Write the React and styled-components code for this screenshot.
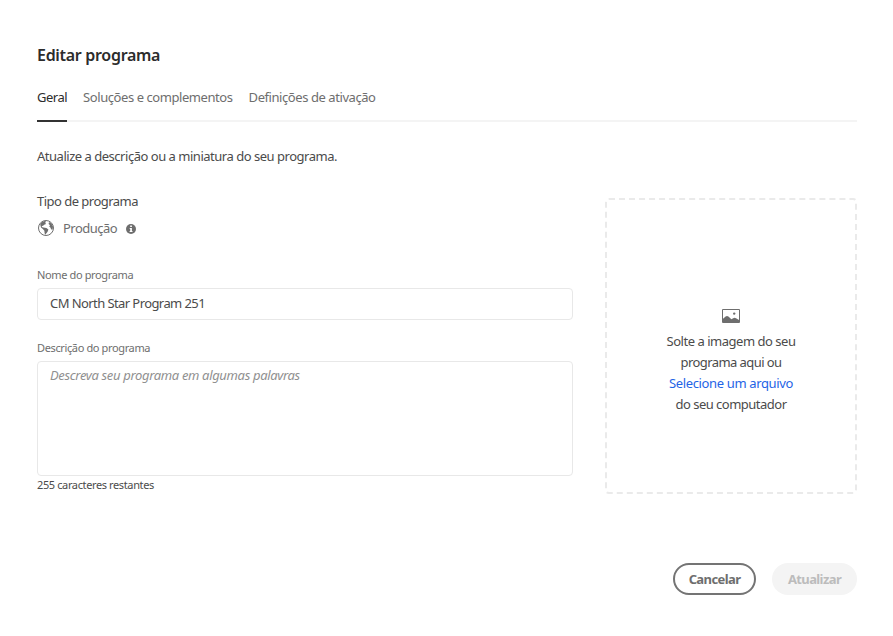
import React from "react";
import styled, { createGlobalStyle } from "styled-components";

const GlobalStyle = createGlobalStyle`
  *, *::before, *::after { box-sizing: border-box; }
  body {
    margin: 0;
    background: #fff;
    color: #4b4b4b;
    font-family: "Noto Sans", "Open Sans", sans-serif;
    font-size: 13px;
    line-height: 20px;
  }
`;

const Dialog = styled.main`
  width: 893px;
  height: 636px;
  padding: 43px 36px 0 37px;
  display: flex;
  flex-direction: column;
`;

const Title = styled.h1`
  margin: 0;
  font-size: 16px;
  font-weight: 600;
  line-height: 24px;
  letter-spacing: -0.3px;
  color: #2c2c2c;
`;

const Tabs = styled.nav`
  display: flex;
  gap: 16px;
  height: 35px;
  margin-top: 20px;
  box-shadow: inset 0 -2px #f4f4f4;
`;

const Tab = styled.a`
  height: 35px;
  white-space: nowrap;
  letter-spacing: ${(p) => p.$spacing}px;
  color: ${(p) => (p.$active ? "#2c2c2c" : "#6e6e6e")};
  border-bottom: 2px solid ${(p) => (p.$active ? "#323232" : "transparent")};
`;

const Intro = styled.p`
  margin: 24px 0 25px;
  letter-spacing: -0.48px;
`;

const Columns = styled.div`
  display: flex;
  justify-content: space-between;
`;

const Form = styled.form`
  width: 536px;
  display: flex;
  flex-direction: column;
`;

const TypeHeading = styled.div`
  letter-spacing: -0.52px;
`;

const TypeRow = styled.div`
  display: flex;
  align-items: center;
  height: 20px;
  margin-top: 7px;
  color: #6e6e6e;
  letter-spacing: -0.53px;
`;

const GlobeIcon = styled.svg`
  width: 18px;
  height: 18px;
  margin-right: 8px;
`;

const InfoIcon = styled.svg`
  width: 10px;
  height: 10px;
  margin: 2px 0 0 9px;
`;

const Label = styled.label`
  margin-top: ${(p) => p.$gap}px;
  height: 21px;
  font-size: 11px;
  line-height: 16px;
  letter-spacing: -0.37px;
  color: #6e6e6e;
`;

const TextInput = styled.input`
  width: 100%;
  height: 32px;
  padding: 0 12px 2px;
  border: 1px solid #e8e8e8;
  border-radius: 4px;
  outline: none;
  background: #fff;
  font: inherit;
  letter-spacing: -0.58px;
  color: #4b4b4b;
`;

const TextArea = styled.textarea`
  display: block;
  width: 100%;
  height: 115px;
  padding: 3px 12px;
  border: 1px solid #e8e8e8;
  border-radius: 4px;
  outline: none;
  resize: none;
  background: #fff;
  font: inherit;
  &::placeholder {
    color: #909090;
    font-style: italic;
    letter-spacing: -0.34px;
  }
`;

const Counter = styled.div`
  margin-top: 1px;
  font-size: 11px;
  line-height: 16px;
  letter-spacing: -0.38px;
`;

const DropZone = styled.section`
  width: 252px;
  height: 296px;
  margin-top: 7px;
  padding-top: 109px;
  display: flex;
  flex-direction: column;
  align-items: center;
  border: 2px dashed #eaeaea;
  border-radius: 4px;
`;

const ImageIcon = styled.svg`
  width: 18px;
  height: 14px;
  margin-bottom: 8px;
`;

const DropLine = styled.span`
  line-height: 21px;
  letter-spacing: ${(p) => p.$spacing}px;
`;

const DropLink = styled(DropLine).attrs({ as: "a" })`
  color: #1f64e6;
`;

const Actions = styled.footer`
  display: flex;
  justify-content: flex-end;
  gap: 16px;
  margin-top: 69px;
`;

const Button = styled.button`
  width: ${(p) => p.$width}px;
  height: 32px;
  padding: 0;
  border: 2px solid ${(p) => (p.disabled ? "#f4f4f4" : "#747474")};
  border-radius: 16px;
  background: ${(p) => (p.disabled ? "#f4f4f4" : "#fff")};
  color: ${(p) => (p.disabled ? "#bcbcbc" : "#6e6e6e")};
  font: inherit;
  font-weight: 700;
  letter-spacing: -0.6px;
`;

export default function App() {
  return (
    <>
      <GlobalStyle />
      <Dialog>
        <Title>Editar programa</Title>
        <Tabs>
          <Tab $active $spacing={-0.5}>Geral</Tab>
          <Tab $spacing={-0.43}>Soluções e complementos</Tab>
          <Tab $spacing={-0.43}>Definições de ativação</Tab>
        </Tabs>
        <Intro>Atualize a descrição ou a miniatura do seu programa.</Intro>
        <Columns>
          <Form>
            <TypeHeading>Tipo de programa</TypeHeading>
            <TypeRow>
              <GlobeIcon viewBox="0 0 18 18">
                <circle cx="9" cy="9" r="7.5" fill="none" stroke="#6e6e6e" />
                <path
                  fill="#6e6e6e"
                  d="M3.2 5.6 4.4 3.6 7.6 2 9.2 2.6 8.2 3.8 9 5 7.2 5.8 5.8 7 5 6.8 4.8 8 6.4 8.6 9.4 9 11.4 10.6 10.6 12.8 9.2 14.4 8.4 15.8 7.6 14.2 7.4 11.8 5.6 9.8 4 8.6ZM12 3 14.4 4.4 16 7.6 15.6 10.6 14.2 10.4 13.4 8.6 12.2 7.6 13 6.2 11.6 5Z"
                />
              </GlobeIcon>
              Produção
              <InfoIcon viewBox="0 0 10 10">
                <circle cx="5" cy="5" r="5" fill="#6e6e6e" />
                <path fill="#fff" d="M4.2 1.6h1.7v1.5H4.2zM3.7 4.1h2.2v3h.6v1H3.6v-1h.6v-2h-.5z" />
              </InfoIcon>
            </TypeRow>
            <Label htmlFor="name" $gap={29}>Nome do programa</Label>
            <TextInput id="name" defaultValue="CM North Star Program 251" />
            <Label htmlFor="description" $gap={20}>Descrição do programa</Label>
            <TextArea id="description" placeholder="Descreva seu programa em algumas palavras" />
            <Counter>255 caracteres restantes</Counter>
          </Form>
          <DropZone>
            <ImageIcon viewBox="0 0 18 14">
              <path fill="none" stroke="#6e6e6e" d="M.5.5h17v13H.5z" />
              <path fill="#6e6e6e" d="M1 9.8 3.6 7.4Q5 6.4 6.4 7.4L9.4 10.2 11.2 9.2Q12.6 8.2 14 9.2L17 11V13.5H1Z" />
              <circle cx="12.2" cy="4.6" r="1.2" fill="#6e6e6e" />
            </ImageIcon>
            <DropLine $spacing={-0.47}>Solte a imagem do seu</DropLine>
            <DropLine $spacing={-0.57}>programa aqui ou</DropLine>
            <DropLink $spacing={-0.36}>Selecione um arquivo</DropLink>
            <DropLine $spacing={-0.51}>do seu computador</DropLine>
          </DropZone>
        </Columns>
        <Actions>
          <Button type="button" $width={83}>Cancelar</Button>
          <Button type="button" $width={85} disabled>Atualizar</Button>
        </Actions>
      </Dialog>
    </>
  );
}
